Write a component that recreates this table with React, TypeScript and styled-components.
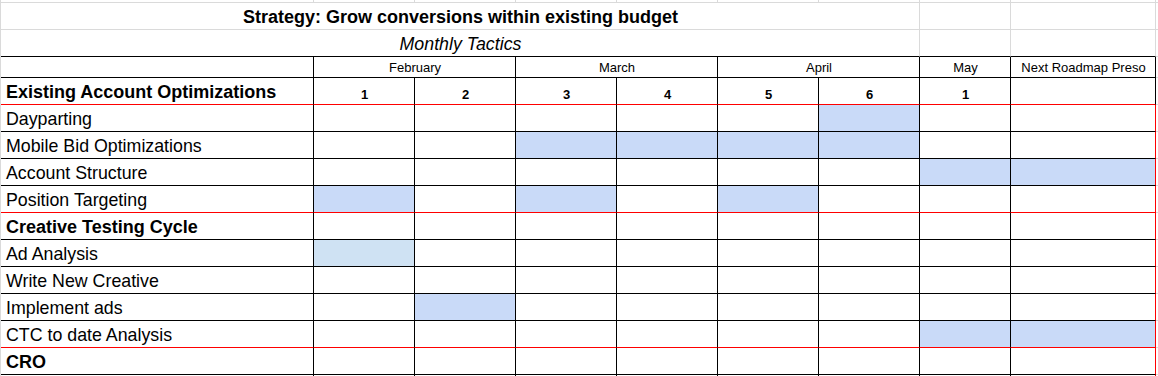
import React from 'react'
import styled, { createGlobalStyle } from 'styled-components'

type Line = 'grid' | 'black' | 'red'

const lineColor: Record<Line, string> = {
  grid: '#dadada',
  black: '#000000',
  red: '#ff0000',
}

const BLUE = '#c9daf8'
const LIGHT_BLUE = '#cfe2f3'

const GlobalStyle = createGlobalStyle`
  html, body {
    margin: 0;
    padding: 0;
    background: #ffffff;
    overflow: hidden;
  }
  body {
    font-family: "Liberation Sans", Arial, sans-serif;
    color: #000000;
  }
`

const Sheet = styled.div`
  display: grid;
  grid-template-columns: 313px repeat(6, 101px) 91px 145px 2px;
  grid-template-rows: 3px 27px 27px 21px 27px repeat(11, 27px);
  width: 1158px;
  height: 376px;
  overflow: hidden;
  border-left: 1px solid ${lineColor.grid};
  box-sizing: border-box;
`

const Row = styled.div`
  display: contents;
`

interface CellProps {
  $span?: number
  $right?: Line
  $bottom?: Line
  $fill?: string
  $center?: boolean
  $middle?: boolean
  $bold?: boolean
  $italic?: boolean
  $size?: number
  $pb?: number
}

const Cell = styled.div<CellProps>`
  grid-column: span ${(p) => p.$span ?? 1};
  box-sizing: border-box;
  display: flex;
  align-items: ${(p) => (p.$middle ? 'center' : 'flex-end')};
  justify-content: ${(p) => (p.$center ? 'center' : 'flex-start')};
  padding: 0 4px ${(p) => p.$pb ?? 1.5}px 5px;
  border-right: 1px solid ${(p) => lineColor[p.$right ?? 'grid']};
  border-bottom: 1px solid ${(p) => lineColor[p.$bottom ?? 'grid']};
  background: ${(p) => p.$fill ?? '#ffffff'};
  font-size: ${(p) => p.$size ?? (p.$bold ? 18 : 17.8)}px;
  font-weight: ${(p) => (p.$bold ? 700 : 400)};
  font-style: ${(p) => (p.$italic ? 'italic' : 'normal')};
  white-space: nowrap;
  overflow: hidden;
`

const Edge = styled.div`
  box-sizing: border-box;
  border-bottom: 1px solid ${lineColor.grid};
`

const months = [
  { label: 'February', span: 2 },
  { label: 'March', span: 2 },
  { label: 'April', span: 2 },
  { label: 'May', span: 1 },
  { label: 'Next Roadmap Preso', span: 1 },
]

const weeks = ['1', '2', '3', '4', '5', '6', '1', '']

interface Task {
  label: string
  bold?: boolean
  fills: Record<number, string>
  bottom: Line
}

const tasks: Task[] = [
  { label: 'Dayparting', fills: { 5: BLUE }, bottom: 'black' },
  { label: 'Mobile Bid Optimizations', fills: { 2: BLUE, 3: BLUE, 4: BLUE, 5: BLUE }, bottom: 'black' },
  { label: 'Account Structure', fills: { 6: BLUE, 7: BLUE }, bottom: 'black' },
  { label: 'Position Targeting', fills: { 0: BLUE, 2: BLUE, 4: BLUE }, bottom: 'red' },
  { label: 'Creative Testing Cycle', bold: true, fills: {}, bottom: 'black' },
  { label: 'Ad Analysis', fills: { 0: LIGHT_BLUE }, bottom: 'black' },
  { label: 'Write New Creative', fills: {}, bottom: 'black' },
  { label: 'Implement ads', fills: { 1: BLUE }, bottom: 'black' },
  { label: 'CTC to date Analysis', fills: { 6: BLUE, 7: BLUE }, bottom: 'red' },
  { label: 'CRO', bold: true, fills: {}, bottom: 'black' },
  { label: '', fills: {}, bottom: 'black' },
]

const App: React.FC = () => {
  return (
    <>
      <GlobalStyle />
      <Sheet>
        <Row>
          {Array.from({ length: 9 }).map((_, i) => (
            <Cell key={i} $pb={0} />
          ))}
          <Edge />
        </Row>

        <Row>
          <Cell $span={7} $center $bold $pb={1}>
            Strategy: Grow conversions within existing budget
          </Cell>
          <Cell />
          <Cell />
          <Edge />
        </Row>

        <Row>
          <Cell $span={7} $center $italic $pb={1} $bottom="black">
            Monthly Tactics
          </Cell>
          <Cell $bottom="black" />
          <Cell $bottom="black" />
          <Edge />
        </Row>

        <Row>
          <Cell $right="black" $bottom="black" />
          {months.map((m) => (
            <Cell key={m.label} $span={m.span} $right="black" $bottom="black" $center $middle $size={13} $pb={0}>
              {m.label}
            </Cell>
          ))}
          <Edge />
        </Row>

        <Row>
          <Cell $right="black" $bottom="red" $bold $pb={1}>
            Existing Account Optimizations
          </Cell>
          {weeks.map((w, i) => (
            <Cell key={i} $right="black" $bottom="red" $center $bold $size={13} $pb={2}>
              {w}
            </Cell>
          ))}
          <Edge />
        </Row>

        {tasks.map((t, r) => (
          <Row key={r}>
            <Cell $right="black" $bottom={t.bottom} $bold={t.bold}>
              {t.label}
            </Cell>
            {Array.from({ length: 8 }).map((_, c) => (
              <Cell key={c} $right={c === 7 ? 'red' : 'black'} $bottom={t.bottom} $fill={t.fills[c]} />
            ))}
            <Edge />
          </Row>
        ))}
      </Sheet>
    </>
  )
}

export default App
